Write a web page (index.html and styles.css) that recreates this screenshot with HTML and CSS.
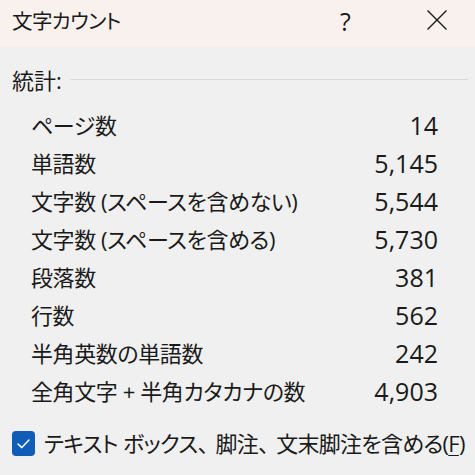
FILE: index.html
```html
<!DOCTYPE html>
<html lang="ja">
<head>
<meta charset="utf-8">
<title>文字カウント</title>
<link rel="stylesheet" href="styles.css">
</head>
<body>
<div class="dialog">
  <div class="titlebar">
    <div class="title">文字カウント</div>
    <div class="help">?</div>
    <div class="close">
      <svg width="22" height="22" viewBox="0 0 22 22"><path d="M1.5 1.5 L20.5 20.5 M20.5 1.5 L1.5 20.5" stroke="#1a1a1a" stroke-width="1.4" fill="none"/></svg>
    </div>
  </div>
  <div class="content">
    <div class="group-head">
      <span class="group-label">統計:</span>
      <span class="group-line"></span>
    </div>
    <div class="stats">
      <div class="row"><span class="label">ページ数</span><span class="value">14</span></div>
      <div class="row"><span class="label">単語数</span><span class="value">5,145</span></div>
      <div class="row"><span class="label">文字数 (スペースを含めない)</span><span class="value">5,544</span></div>
      <div class="row"><span class="label">文字数 (スペースを含める)</span><span class="value">5,730</span></div>
      <div class="row"><span class="label">段落数</span><span class="value">381</span></div>
      <div class="row"><span class="label">行数</span><span class="value">562</span></div>
      <div class="row"><span class="label">半角英数の単語数</span><span class="value">242</span></div>
      <div class="row"><span class="label">全角文字 + 半角カタカナの数</span><span class="value">4,903</span></div>
    </div>
    <div class="check-row">
      <span class="checkbox">
        <svg width="23" height="25" viewBox="0 0 23 25"><path d="M6 13 L9.8 16.6 L17 9" stroke="#ffffff" stroke-width="1.5" fill="none" stroke-linecap="round" stroke-linejoin="round"/></svg>
      </span>
      <span class="check-label">テキスト ボックス<span class="punct">、</span>脚注<span class="punct">、</span>文末脚注を含める(<u>F</u>)</span>
    </div>
  </div>
</div>
</body>
</html>
```
FILE: styles.css
```css
html, body {
  margin: 0;
  padding: 0;
}
body {
  width: 475px;
  height: 475px;
  overflow: hidden;
  background: #f0f0f0;
  color: #1a1a1a;
  font-family: "Open Sans", "Noto Sans CJK JP", sans-serif;
  font-feature-settings: "palt";
}
.dialog {
  display: flex;
  flex-direction: column;
}
.titlebar {
  height: 47px;
  background: #f9f1ed;
  display: flex;
  align-items: center;
  padding-left: 12px;
}
.title {
  flex: 1;
  font-size: 20.5px;
  letter-spacing: -0.6px;
  line-height: 30px;
  margin-top: -5px;
}
.help {
  font-size: 25px;
  line-height: 30px;
  width: 16px;
  margin-top: -5px;
  margin-right: 70px;
}
.close {
  width: 22px;
  height: 22px;
  margin-right: 27px;
  margin-top: -7px;
  display: flex;
}
.content {
  padding: 0 7px 0 12px;
}
.group-head {
  margin-top: 19px;
  height: 28px;
  display: flex;
  align-items: center;
}
.group-label {
  font-size: 22px;
  line-height: 28px;
}
.group-line {
  flex: 1;
  height: 1px;
  background: #d9d9d9;
  margin-left: 8px;
  margin-top: -1px;
}
.stats {
  margin-top: 12px;
  padding: 0 30px 0 19px;
}
.row {
  height: 38px;
  display: flex;
  align-items: center;
  justify-content: space-between;
}
.label {
  font-size: 22px;
  letter-spacing: -0.4px;
  line-height: 38px;
}
.value {
  font-size: 25px;
  line-height: 38px;
}
.check-row {
  margin-top: 18px;
  height: 30px;
  display: flex;
  align-items: center;
}
.checkbox {
  width: 23px;
  height: 25px;
  background: #0f5db6;
  border-radius: 4px;
  display: flex;
  flex-shrink: 0;
}
.check-label {
  margin-left: 9px;
  font-size: 22px;
  letter-spacing: -0.7px;
  line-height: 30px;
  white-space: nowrap;
}
.punct {
  font-feature-settings: normal;
  letter-spacing: -4px;
}
.check-label u {
  text-decoration-thickness: 1px;
  text-underline-offset: 3px;
}
```
